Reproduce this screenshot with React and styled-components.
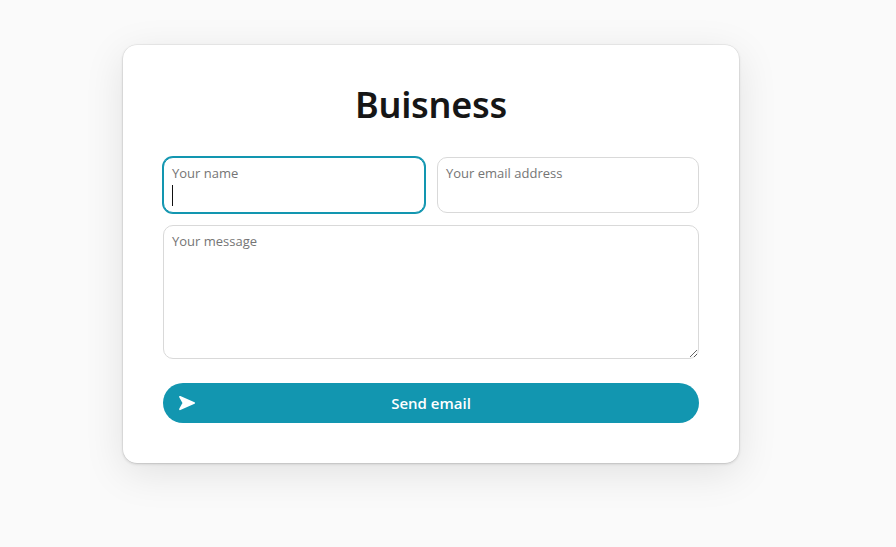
import React from "react";
import styled, { createGlobalStyle } from "styled-components";

const Global = createGlobalStyle`
  html, body { margin: 0; padding: 0; height: 100%; background: #fafafa; overflow: hidden; }
  body { font-family: "Open Sans", "Noto Sans", "Liberation Sans", sans-serif; }
  #root { height: 100%; }
`;

const Page = styled.main`
  width: 896px;
  height: 547px;
  padding: 45px 157px 0 123px;
  box-sizing: border-box;
  background: #fafafa;
`;

const Card = styled.form`
  width: 616px;
  height: 418px;
  box-sizing: border-box;
  padding: 40px;
  background: #fff;
  border-radius: 14px;
  box-shadow: 0 0 0 0.5px rgba(0, 0, 0, 0.08), 0 1px 3px rgba(0, 0, 0, 0.16), 0 10px 40px rgba(0, 0, 0, 0.1);
  display: flex;
  flex-direction: column;
`;

const Title = styled.h1`
  margin: 0 0 26px;
  height: 46px;
  flex: none;
  line-height: 40px;
  font-size: 36px;
  font-weight: 600;
  letter-spacing: -0.3px;
  text-align: center;
  color: #161616;
  font-family: "Noto Sans", "Open Sans", sans-serif;
`;

const Row = styled.div`
  display: grid;
  flex: none;
  grid-template-columns: 1fr 1fr;
  gap: 12px;
  margin-bottom: 12px;
`;

const Field = styled.label`
  height: 56px;
  box-sizing: border-box;
  padding: 6px 8px;
  border: 1px solid ${p => (p.$focused ? "#1296b0" : "#d9d9d9")};
  box-shadow: ${p => (p.$focused ? "0 0 0 1px #1296b0" : "none")};
  border-radius: 10px;
  display: flex;
  flex-direction: column;
  gap: 3px;
  background: #fff;
`;

const FieldLabel = styled.span`
  font-size: 13px;
  line-height: 18px;
  color: #757575;
`;

const Caret = styled.span`
  display: block;
  width: 1px;
  height: 21px;
  background: #111;
`;

const Message = styled.textarea`
  display: block;
  flex: none;
  width: 100%;
  height: 134px;
  box-sizing: border-box;
  margin: 0 0 24px;
  padding: 6px 8px;
  border: 1px solid #d9d9d9;
  border-radius: 10px;
  outline: none;
  resize: vertical;
  font-family: inherit;
  font-size: 13px;
  line-height: 18px;
  &::placeholder { color: #757575; opacity: 1; }
`;

const SendButton = styled.button`
  height: 40px;
  flex: none;
  width: 100%;
  padding: 0 15px;
  border: none;
  border-radius: 20px;
  background: #1296b0;
  color: #fff;
  font-family: inherit;
  font-size: 15px;
  font-weight: 600;
  display: grid;
  grid-template-columns: 18px 1fr 18px;
  align-items: center;
`;

const SendIcon = styled.svg`
  width: 18px;
  height: 16px;
  display: block;
`;

export default function App() {
  return (
    <Page>
      <Global />
      <Card onSubmit={e => e.preventDefault()}>
        <Title>Buisness</Title>
        <Row>
          <Field $focused>
            <FieldLabel>Your name</FieldLabel>
            <Caret />
          </Field>
          <Field>
            <FieldLabel>Your email address</FieldLabel>
          </Field>
        </Row>
        <Message placeholder="Your message" />
        <SendButton type="submit">
          <SendIcon viewBox="0 0 18 16" aria-hidden="true">
            <path d="M2 1.8 L16.2 8 L2 14.2 L5.5 8 Z" fill="#fff" stroke="#fff" strokeWidth="1.8" strokeLinejoin="round" />
          </SendIcon>
          <span>Send email</span>
          <span />
        </SendButton>
      </Card>
    </Page>
  );
}
